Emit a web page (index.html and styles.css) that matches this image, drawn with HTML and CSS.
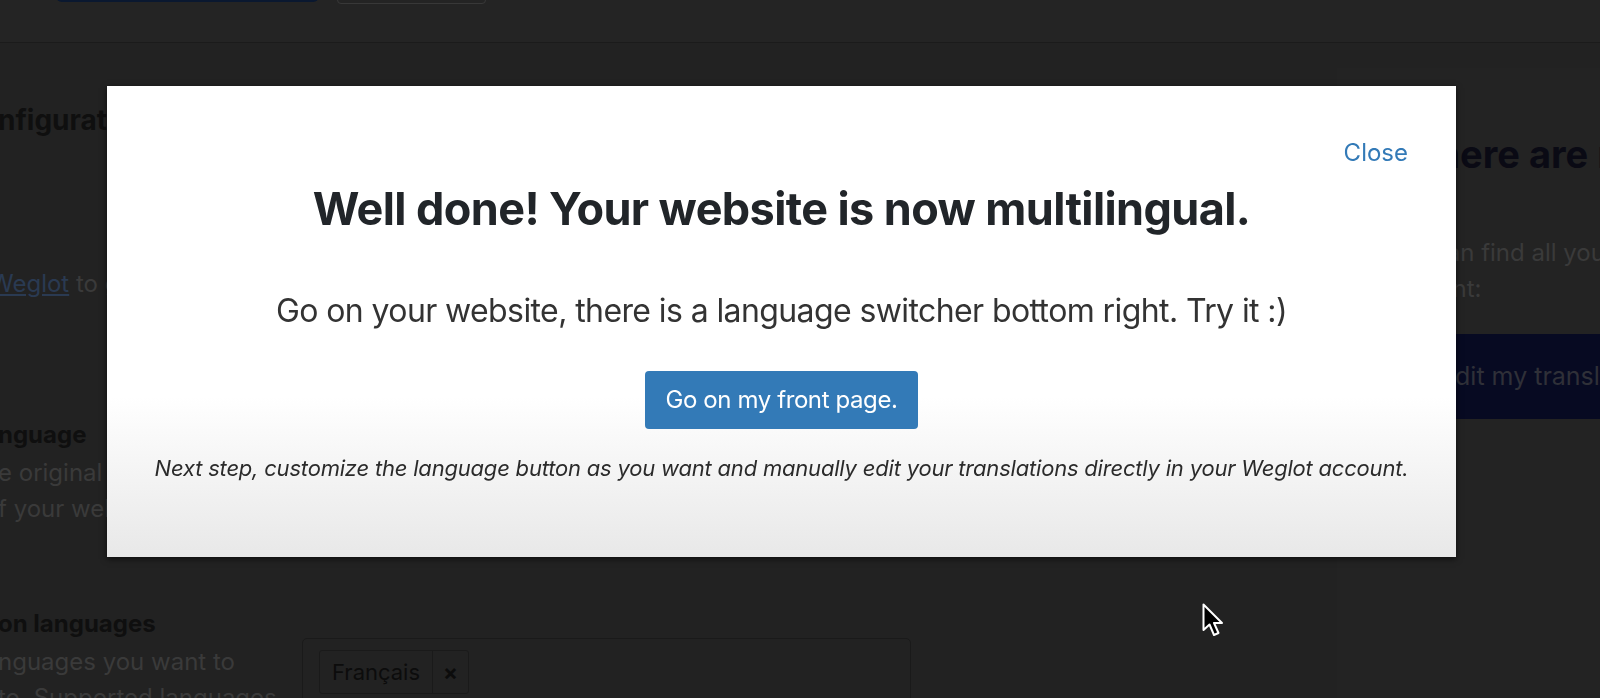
FILE: index.html
```html
<!DOCTYPE html>
<html lang="en">
<head>
    <meta charset="UTF-8">
    <title>Weglot - Configuration</title>
    <link rel="stylesheet" href="styles.css">
</head>
<body>
    <div class="admin">
        <div class="toolbar">
            <span class="btn-save"></span>
            <span class="btn-ghost"></span>
        </div>

        <div class="layout">
            <div class="col-left">
                <h2>nfiguration</h2>
                <p class="api"><a href="#">Weglot</a> to get your API key</p>
                <h3>nguage</h3>
                <p>e original (source) language<br>f your website</p>
                <h3 class="tr-title">on languages</h3>
                <p>nguages you want to<br>to. Supported languages</p>
            </div>

            <div class="col-mid">
                <div class="lang-input">
                    <span class="chip"><span class="chip-label">Français</span><span class="chip-x">×</span></span>
                </div>
            </div>

            <div class="col-gap"></div>

            <div class="col-right">
                <h2>Where are my translations?</h2>
                <p>You can find all your translations in your Weglot<br>account:</p>
                <a class="btn-edit" href="#">Edit my translations</a>
            </div>
        </div>
    </div>

    <!-- modal affiché après la sauvegarde -->
    <div class="backdrop">
        <div class="modal">
            <div class="modal-top">
                <a class="close" href="#">Close</a>
            </div>
            <h1>Well done! Your website is now multilingual.</h1>
            <p class="lead">Go on your website, there is a language switcher bottom right. Try it :)</p>
            <a class="btn-front" href="#">Go on my front page.</a>
            <p class="next">Next step, customize the language button as you want and manually edit your translations directly in your Weglot account.</p>
        </div>
    </div>

    <svg class="cursor" width="24" height="36" viewBox="0 0 24 36">
        <path d="M1.5 1.5 L1.5 27 L7.5 21.5 L12 32 L16.5 30 L12 20 L20 20 Z" fill="#000" stroke="#fff" stroke-width="2" stroke-linejoin="round"/>
    </svg>
</body>
</html>
```

FILE: styles.css
```css
body, html {
    margin: 0;
    padding: 0;
    height: 698px;
    overflow: hidden;
    background: #222222;
    font-family: 'Inter', 'Noto Sans', sans-serif;
}

/* Page d'admin derrière le modal (assombrie) */
.admin {
    width: 1600px;
    height: 698px;
    overflow: hidden;
}

.toolbar {
    height: 42px;
    background: #242424;
    border-bottom: 1px solid #1b1b1b;
    display: flex;
    align-items: flex-start;
    gap: 18px;
    padding-left: 56px;
}

.btn-save {
    width: 263px;
    height: 24px;
    margin-top: -22px;
    background: #0a1830;
    border-radius: 6px;
}

.btn-ghost {
    width: 147px;
    height: 24px;
    margin-top: -22px;
    border: 1px solid #383838;
    border-radius: 4px;
}

.layout {
    display: grid;
    grid-template-columns: 302px 609px 426px 263px;
}

.col-left {
    white-space: nowrap;
    overflow: hidden;
}

.col-left h2 {
    margin: 60px 0 0 -2px;
    font-size: 28px;
    line-height: 34px;
    font-weight: 700;
    color: #0f0f0f;
}

.col-left h3 {
    margin: 116px 0 0 -2px;
    font-size: 24px;
    line-height: 34px;
    font-weight: 700;
    color: #0f0f0f;
}

.col-left h3.tr-title {
    margin-top: 80px;
}

.col-left p {
    margin: 3px 0 0 -2px;
    font-size: 24px;
    line-height: 36px;
    color: #3a3a3a;
}

.col-left p.api {
    margin-top: 129px;
}

.col-left a {
    color: #2a3a52;
    margin-left: -8px;
}

.col-mid {
    padding-top: 595px;
}

.lang-input {
    height: 80px;
    border: 1px solid #1a1a1a;
    border-radius: 5px;
    padding: 11px 16px;
    box-sizing: border-box;
}

.chip {
    display: inline-flex;
    height: 42px;
    border: 1px solid #1a1a1a;
    border-radius: 3px;
    font-size: 22px;
    color: #0c0c0c;
    line-height: 42px;
}

.chip-label {
    padding: 0 12px;
    border-right: 1px solid #1a1a1a;
}

.chip-x {
    padding: 0 10px;
    font-weight: 700;
}

.col-right {
    margin-top: 25px;
    background: #232323;
    padding-left: 63px;
    white-space: nowrap;
    overflow: hidden;
}

.col-right h2 {
    margin: 62px 0 0 -3px;
    font-size: 38px;
    line-height: 48px;
    font-weight: 700;
    color: #0a0a14;
}

.col-right p {
    margin: 57px 0 0 -17px;
    font-size: 24px;
    line-height: 36px;
    color: #3a3a3a;
}

.btn-edit {
    display: block;
    margin-top: 27px;
    height: 85px;
    line-height: 85px;
    padding-left: 40px;
    background: #070a22;
    color: #2f3038;
    font-size: 25px;
    text-decoration: none;
}

/* Modal */
.backdrop {
    position: fixed;
    top: 0;
    left: 0;
    width: 100%;
    height: 100%;
}

.modal {
    margin: 86px 0 0 107px;
    width: 1349px;
    height: 471px;
    box-sizing: border-box;
    padding: 52px 48px 0 48px;
    background: linear-gradient(to bottom, #ffffff 0%, #ffffff 66%, #e8e8e8 100%);
    box-shadow: 0 2px 6px rgba(0, 0, 0, 0.6);
    text-align: center;
}

.modal-top {
    display: flex;
    justify-content: flex-end;
}

.close {
    font-size: 24px;
    line-height: 29px;
    color: #337ab7;
    text-decoration: none;
}

.modal h1 {
    margin: 18px 0 0;
    font-size: 45px;
    line-height: 48px;
    font-weight: 700;
    letter-spacing: -0.6px;
    color: #212529;
}

.modal .lead {
    margin: 58px 0 0;
    font-size: 32px;
    line-height: 40px;
    letter-spacing: -0.6px;
    color: #333333;
}

.btn-front {
    display: inline-block;
    margin-top: 40px;
    height: 58px;
    line-height: 58px;
    padding: 0 20px;
    background: #337ab7;
    border-radius: 4px;
    color: white;
    font-size: 24px;
    letter-spacing: -0.4px;
    text-decoration: none;
}

.modal .next {
    margin: 25px -30px 0;
    white-space: nowrap;
    font-size: 22px;
    line-height: 28px;
    font-style: italic;
    letter-spacing: -0.2px;
    color: #2b2b2b;
}

.cursor {
    position: absolute;
    left: 1202px;
    top: 603px;
}
```
